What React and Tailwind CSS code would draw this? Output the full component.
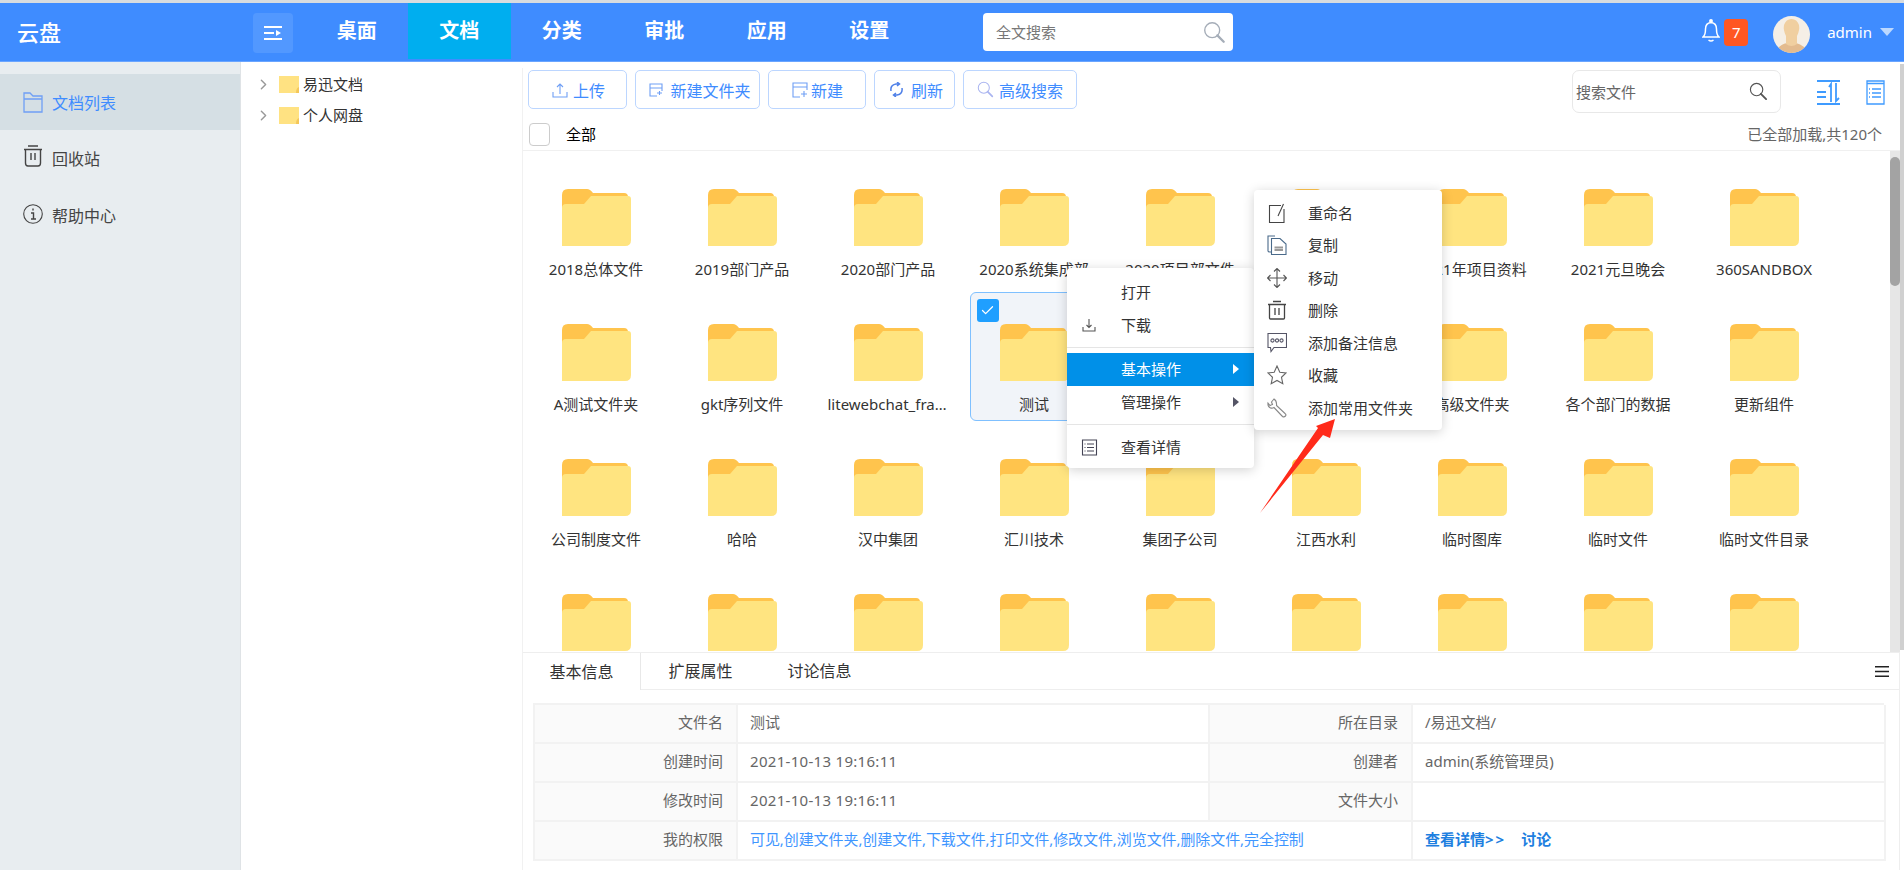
import { ChevronRight, Check } from "lucide-react";

const navs = ["桌面", "文档", "分类", "审批", "应用", "设置"];

const files = [
  "2018总体文件", "2019部门产品", "2020部门产品", "2020系统集成部", "2020项目部文件", "2021年度计划", "2021年项目资料", "2021元旦晚会", "360SANDBOX",
  "A测试文件夹", "gkt序列文件", "litewebchat_framework", "测试", "测试文件", "产品资料", "高级文件夹", "各个部门的数据", "更新组件",
  "公司制度文件", "哈哈", "汉中集团", "汇川技术", "集团子公司", "江西水利", "临时图库", "临时文件", "临时文件目录",
  "", "", "", "", "", "", "", "", "",
];

function Folder() {
  return (
    <svg width="69" height="57" viewBox="0 0 69 57" className="block mx-auto">
      <path d="M0 20V6Q0 0 6 0H25Q28 0 31 4H62Q66 4 66 8V20Z" fill="#ffc44d" />
      <path d="M0 19Q0 15 4 15H22L29 7H66Q69 7 69 10V51Q69 57 63 57H0Z" fill="#ffe480" />
    </svg>
  );
}

function TreeFolder() {
  return (
    <svg width="20" height="17" viewBox="0 0 20 17" className="shrink-0">
      <path d="M0 0H20V17H0Z" fill="#ffe282" />
      <path d="M20 11V17H17Q17 12 20 11Z" fill="#f4c75a" />
    </svg>
  );
}

function Glass({ size = 20, color = "#777" }) {
  return (
    <svg width={size} height={size} viewBox="0 0 20 20" fill="none" stroke={color}>
      <circle cx="8" cy="8" r="6.5" strokeWidth="1.2" />
      <path d="M12.5 12.5L18 18" strokeWidth="2" strokeLinecap="round" />
    </svg>
  );
}

function Ico({ children, size = 18, color = "#3f8cff", view = 18 }) {
  return (
    <svg width={size} height={size} viewBox={`0 0 ${view} ${view}`} fill="none" stroke={color} strokeWidth="1.1" className="shrink-0">
      {children}
    </svg>
  );
}

function ToolBtn({ w, icon, label, gap = "gap-[5px]" }) {
  return (
    <button className={`${w} ${gap} h-[39px] flex items-center justify-center border border-[#bcd6ff] rounded-[5px] bg-white text-[16px] text-[#3f8cff]`}>
      {icon}
      <span className="mt-[2px]">{label}</span>
    </button>
  );
}

const Row = ({ children }) => <div className="contents">{children}</div>;
const Lab = ({ children }) => (
  <div className="h-[39px] pb-[2px] flex items-center justify-end pr-[13px] bg-[#fafafa] border-r-2 border-b-2 border-[#f2f2f2] text-[15px] text-[#666]">{children}</div>
);
const Val = ({ children, cls = "" }) => (
  <div className={`h-[39px] pb-[2px] flex items-center pl-[12px] border-r-2 border-b-2 border-[#f2f2f2] text-[15px] text-[#666] ${cls}`}>{children}</div>
);

function MenuItem({ icon, label, active, arrow }) {
  return (
    <div className={`h-[32.5px] flex items-center text-[15px] relative ${active ? "bg-[#0090e8] text-white" : "text-[#333]"}`}>
      <span className="w-[54px] flex justify-center pr-[10px]">{icon}</span>
      {label}
      {arrow && (
        <svg width="6" height="10" viewBox="0 0 6 10" className="absolute left-[166px] top-[11px]">
          <path d="M0 0L6 5L0 10Z" fill={active ? "#fff" : "#556"} />
        </svg>
      )}
    </div>
  );
}

const subItems = [
  {
    label: "重命名",
    icon: (
      <Ico size={20} color="#444" view={20}>
        <path d="M14 2.5H2.5V19.5H17V6" />
        <path d="M16.5 1L11 13" />
      </Ico>
    ),
  },
  {
    label: "复制",
    icon: (
      <Ico size={20} color="#4a6a8a" view={20}>
        <path d="M8 1H1V16Q1 17 3 17H5" />
        <path d="M4.5 3.5H13L19 9V19.5H4.5Z" />
        <path d="M7.5 12.5H16M7.5 15H16" stroke="#999" strokeWidth="2" />
      </Ico>
    ),
  },
  {
    label: "移动",
    icon: (
      <Ico size={20} color="#555" view={20}>
        <path d="M10 .5V19.5M.5 10H19.5M7 3.5L10 .5L13 3.5M7 16.5L10 19.5L13 16.5M3.5 7L.5 10L3.5 13M16.5 7L19.5 10L16.5 13" />
      </Ico>
    ),
  },
  {
    label: "删除",
    icon: (
      <Ico size={20} color="#444" view={20}>
        <path d="M1 4.5H19M6 1.5H14M2.5 4.5V18Q2.5 19 3.5 19H16.5Q17.5 19 17.5 18V4.5M8 8V15M12 8V15" strokeWidth="1.3" />
      </Ico>
    ),
  },
  {
    label: "添加备注信息",
    icon: (
      <Ico size={20} color="#556" view={20}>
        <path d="M1 .5H19.5V14.5H7L4 18.5L3.5 14.5H1Z" />
        <circle cx="5.5" cy="7.5" r="1.6" />
        <circle cx="10" cy="7.5" r="1.6" />
        <circle cx="14.5" cy="7.5" r="1.6" />
      </Ico>
    ),
  },
  {
    label: "收藏",
    icon: (
      <Ico size={20} color="#666" view={20}>
        <path d="M10 1L12.8 7.2L19 8L14.5 12.3L15.8 18.8L10 15.5L4.2 18.8L5.5 12.3L1 8L7.2 7.2Z" />
      </Ico>
    ),
  },
  {
    label: "添加常用文件夹",
    icon: (
      <Ico size={20} color="#888" view={20}>
        <path d="M7 1L4.5 4L5.5 6.5L3 7.5L1 5Q.5 9 3.5 10Q5.5 10.5 7 9.5L15.5 18.5Q17 19.5 18.5 18Q19.5 16.5 18 15.5L9.5 7.5Q10 3 7 1Z" />
      </Ico>
    ),
  },
];

export default function App() {
  return (
    <div className="relative h-screen overflow-hidden bg-white font-['Noto_Sans','Noto_Sans_CJK_SC',sans-serif]">
      <div className="h-[3px] bg-[#d8dcdf]" />

      {/* top bar */}
      <header className="h-[59px] flex bg-[#3f8cff] border-b border-[#6aa5ff] text-white">
        <div className="w-[253px] pl-[17px] flex items-center text-[22px] font-medium">云盘</div>
        <div className="mt-[10px] w-10 h-10 rounded bg-white/10 flex items-center justify-center">
          <svg width="18" height="14" viewBox="0 0 18 14" fill="white">
            <path d="M0 0H18V2H0ZM0 6H10V8H0ZM0 12H18V14H0ZM12 4L17 7L12 10Z" />
          </svg>
        </div>
        <nav className="ml-[12.5px] flex">
          {navs.map((n) => (
            <a key={n} className={`w-[102.5px] h-[56px] flex items-center justify-center text-[20px] font-bold ${n === "文档" ? "bg-[#00aeef]" : ""}`}>
              {n}
            </a>
          ))}
        </nav>
        <div className="ml-[62.5px] mt-[10px] w-[250px] h-[38px] bg-white rounded-sm flex items-center pl-[13px] pr-[7px] text-[15px] text-[#777]">
          全文搜索
          <span className="ml-auto">
            <Glass size={23} color="#a5adb8" />
          </span>
        </div>
        <div className="ml-auto flex items-start">
          <svg width="18" height="24" viewBox="0 0 18 24" fill="none" stroke="white" strokeWidth="1.5" className="mt-[16px]">
            <path d="M1 18Q3.5 16 3.5 10Q3.5 4 9 3.5Q14.5 4 14.5 10Q14.5 16 17 18Z" />
            <circle cx="9" cy="2" r="1.2" fill="white" />
            <path d="M6.5 21Q9 23 11.5 21" />
          </svg>
          <span className="ml-[4px] mt-[16px] w-[24px] h-[27px] rounded-sm bg-[#ff5722] flex items-center justify-center text-[15px]">7</span>
          <svg width="37" height="37" viewBox="0 0 37 37" className="ml-[25px] mt-[13px]">
            <clipPath id="av">
              <circle cx="18.5" cy="18.5" r="18.5" />
            </clipPath>
            <g clipPath="url(#av)">
              <rect width="37" height="37" fill="#f5efe6" />
              <path d="M3 37Q5 29 14 27Q18.5 30 23 27Q32 29 34 37Z" fill="#e3bb8f" />
              <path d="M13 28V20Q10 14 11 9Q13 3 18.5 3Q24 3 26 9Q27 14 24 20V28Q18.5 32 13 28Z" fill="#f0cfa0" />
            </g>
          </svg>
          <span className="ml-[17px] mt-[18px] text-[15px]">admin</span>
          <svg width="14" height="8" viewBox="0 0 14 8" className="ml-[8px] mt-[25px] mr-[10px]">
            <path d="M0 0H14L7 8Z" fill="#bcd8ff" />
          </svg>
        </div>
      </header>

      <div className="flex h-[808px]">
        {/* left menu */}
        <aside className="w-[241px] shrink-0 bg-[#e8edf0] border-r border-[#dfe3e6] pt-[12px] text-[16px]">
          <div className="h-[56px] bg-[#d5dfe4] flex items-center pl-[23px] gap-[9px] text-[#3f8cff]">
            <svg width="20" height="21" viewBox="0 0 20 21" fill="none" stroke="#6f9ff5" strokeWidth="1.3">
              <path d="M1 20V1H7L10 4H19V20ZM1 7H19" />
            </svg>
            <span className="mt-[2px]">文档列表</span>
          </div>
          <div className="h-[56px] flex items-center pl-[23px] gap-[9px] text-[#444]">
            <svg width="20" height="22" viewBox="0 0 20 22" fill="none" stroke="#444" strokeWidth="1.4" className="mb-[4px]">
              <path d="M5 1H15M1 4.5H19M2.5 4.5V18Q2.5 21 5 21H15Q17.5 21 17.5 18V4.5M8 8V15M12 8V15" />
            </svg>
            <span className="mt-[2px]">回收站</span>
          </div>
          <div className="h-[56px] flex items-center pl-[23px] gap-[9px] text-[#444]">
            <svg width="20" height="20" viewBox="0 0 20 20" fill="none" stroke="#444" strokeWidth="1.1">
              <circle cx="10" cy="10" r="9.3" />
              <path d="M8 9H10.5V15M8 15H13M10 4.5V6.5" strokeWidth="1.4" />
            </svg>
            <span className="mt-[3px]">帮助中心</span>
          </div>
        </aside>

        {/* tree */}
        <div className="w-[281px] shrink-0 pt-[7px] text-[15px] text-[#333]">
          {["易迅文档", "个人网盘"].map((t) => (
            <div key={t} className="h-[31px] flex items-center pl-[14px]">
              <ChevronRight size={17} color="#999" />
              <span className="ml-[7px] mr-[4px]">
                <TreeFolder />
              </span>
              {t}
            </div>
          ))}
        </div>

        {/* content */}
        <main className="flex-1 min-w-0 mt-[6px] border-l border-[#f1f1f1] flex flex-col">
          <div className="h-[50px] flex items-start pt-[2px] pl-[5px] pr-[15px]">
            <div className="flex gap-2">
              <ToolBtn
                w="w-[99px] pl-[2px]"
                label="上传"
                icon={
                  <Ico size={16} view={16} color="#6f9ff5">
                    <path d="M1 10V15H15V10M8 12V2M5 5L8 2L11 5" />
                  </Ico>
                }
              />
              <ToolBtn
                w="w-[125px] pl-[5px]"
                gap="gap-[7px]"
                label="新建文件夹"
                icon={
                  <Ico size={14} view={14} color="#6f9ff5">
                    <path d="M13 8V1H1V13H8M1 5H13M8 10H13M10.5 8V12" />
                  </Ico>
                }
              />
              <ToolBtn
                w="w-[98px] pl-[1px]"
                gap="gap-[3px]"
                label="新建"
                icon={
                  <Ico size={16} view={16} color="#6f9ff5">
                    <path d="M15 8V1H1V15H8M1 5H15M9 12H15M12 9V15" />
                  </Ico>
                }
              />
              <ToolBtn
                w="w-[81px] pl-[3px]"
                gap="gap-[7px]"
                label="刷新"
                icon={
                  <Ico size={15} view={15} color="#4f80e8">
                    <path d="M2 9Q1 3 7 2H10M8 0L10.5 2L8 4M13 6Q14 12 8 13H5M7 11L4.5 13L7 15" strokeWidth="1.5" />
                  </Ico>
                }
              />
              <ToolBtn w="w-[114px]" label="高级搜索" icon={<Glass size={17} color="#a9b4f0" />} />
            </div>

            <div className="ml-auto w-[209px] h-[43px] border border-[#e8e8e8] rounded-[7px] flex items-center pl-[3px] pr-[12px] text-[15px] text-[#666]">
              <span className="mt-[2px]">搜索文件</span>
              <span className="ml-auto">
                <Glass size={19} color="#555" />
              </span>
            </div>
            <svg width="26" height="25" viewBox="0 0 26 25" fill="none" stroke="#3f9bff" strokeWidth="1.8" className="ml-[36px] mt-[10px]">
              <path d="M0 1H23M0 12H9M0 17H9M0 24H23M14 22V4L12 7M19 3V21L22 18" />
            </svg>
            <svg width="19" height="25" viewBox="0 0 19 25" fill="none" stroke="#3f9bff" strokeWidth="1.3" className="ml-[23px] mt-[10px]">
              <path d="M1 1H18V24H1ZM1 3.5H18M6 9H15M6 13H15M6 17H15M3 9H4M3 13H4M3 17H4" />
            </svg>
          </div>

          <div className="h-[33px] flex items-center pl-[6px] pr-[18px] border-b border-[#f0f0f0]">
            <span className="w-[21px] h-[23px] border border-[#ccc] rounded-sm" />
            <span className="ml-[16px] text-[15px] text-black">全部</span>
            <span className="ml-auto text-[15px] text-[#666]">已全部加载,共120个</span>
          </div>

          <div className="h-[501px] flex overflow-hidden">
            <div className="flex-1 pl-[8.5px] pt-[6px] grid grid-cols-[repeat(9,129px)] auto-rows-[129px] gap-x-[17px] gap-y-[6px]">
              {files.map((f, i) => (
                <div key={i} className={`relative rounded-md border pt-[31px] ${f === "测试" ? "bg-[#f1f4f9] border-[#7fc0ff]" : "border-transparent"}`}>
                  {f === "测试" && (
                    <span className="absolute left-[6px] top-[6px] w-[22px] h-[23px] rounded-[3px] bg-[#1f9fff] flex items-center justify-center">
                      <Check size={15} color="white" strokeWidth={2} />
                    </span>
                  )}
                  <Folder />
                  <div className="mt-[13px] px-[3px] text-center truncate text-[15px] leading-[20px] text-[#333]">{f}</div>
                </div>
              ))}
            </div>
            <div className="w-[10px] bg-[#e6e6e6] pt-[6px]">
              <div className="h-[129px] bg-[#a3a3a3] rounded-full" />
            </div>
          </div>

          {/* detail panel */}
          <div className="h-[218px] border-t border-r border-[#eeeeee]">
            <div className="h-[37px] flex items-stretch border-b border-[#eeeeee] text-[16px] text-[#333]">
              <span className="w-[118px] h-[37px] bg-white border-r border-[#e8e8e8] flex items-center justify-center">基本信息</span>
              <span className="w-[119px] flex items-center justify-center">扩展属性</span>
              <span className="w-[119px] flex items-center justify-center">讨论信息</span>
              <svg width="14" height="11" viewBox="0 0 14 11" className="ml-auto mr-[10px] mt-[13px]">
                <path d="M0 0H14V1.5H0ZM0 4.75H14V6.25H0ZM0 9.5H14V11H0Z" fill="#222" />
              </svg>
            </div>
            <div className="ml-[10px] mt-[13px] w-[1351px] grid grid-cols-[203px_472px_203px_473px] border-l-2 border-t-2 border-[#f2f2f2]">
              <Row>
                <Lab>文件名</Lab>
                <Val>测试</Val>
                <Lab>所在目录</Lab>
                <Val>/易迅文档/</Val>
              </Row>
              <Row>
                <Lab>创建时间</Lab>
                <Val cls="tracking-[0.3px]">2021-10-13 19:16:11</Val>
                <Lab>创建者</Lab>
                <Val>admin(系统管理员)</Val>
              </Row>
              <Row>
                <Lab>修改时间</Lab>
                <Val cls="tracking-[0.3px]">2021-10-13 19:16:11</Val>
                <Lab>文件大小</Lab>
                <Val />
              </Row>
              <Row>
                <Lab>我的权限</Lab>
                <Val cls="col-span-2 !text-[#3f96ff] tracking-[-0.08px]">可见,创建文件夹,创建文件,下载文件,打印文件,修改文件,浏览文件,删除文件,完全控制</Val>
                <Val cls="gap-[15px] !text-[#1e7fe0] font-bold">
                  <span>
                    查看详情<span className="tracking-[2px]">&gt;&gt;</span>
                  </span>
                  <span>讨论</span>
                </Val>
              </Row>
            </div>
          </div>
        </main>

        <div className="w-[4px] shrink-0 mt-[2px] h-[586px] bg-[#d0d0d0]" />
      </div>

      {/* context menu */}
      <div className="absolute left-[1067px] top-[268px] w-[187px] h-[200px] bg-white rounded-[4px] shadow-[0_2px_12px_rgba(0,0,0,0.18)] pt-[8px]">
        <MenuItem label="打开" />
        <MenuItem
          label="下载"
          icon={
            <Ico size={14} view={14} color="#555">
              <path d="M1 9V13H13V9M7 1V9.5M4.5 7L7 9.5L9.5 7" />
            </Ico>
          }
        />
        <div className="h-[12px] flex items-center">
          <div className="w-full h-px bg-[#e5e5e5]" />
        </div>
        <MenuItem label="基本操作" active arrow />
        <MenuItem label="管理操作" arrow />
        <div className="h-[13px] flex items-center">
          <div className="w-full h-px bg-[#e5e5e5]" />
        </div>
        <MenuItem
          label="查看详情"
          icon={
            <Ico size={17} view={17} color="#445">
              <path d="M1.5 1H15.5V16H1.5ZM6 5H13M6 8.5H13M6 12H13M3.5 5H4.5M3.5 8.5H4.5M3.5 12H4.5" />
            </Ico>
          }
        />
      </div>

      {/* sub menu */}
      <div className="absolute left-[1254px] top-[190px] w-[188px] h-[240px] bg-white rounded-[4px] shadow-[0_2px_12px_rgba(0,0,0,0.18)] pt-[6.5px]">
        {subItems.map((s) => (
          <div key={s.label} className="h-[32.5px] flex items-center pl-[13px] text-[15px] text-[#333]">
            <span className="w-[41px] shrink-0">{s.icon}</span>
            {s.label}
          </div>
        ))}
      </div>

      {/* red arrow */}
      <svg width="80" height="100" viewBox="0 0 80 100" className="absolute left-[1258px] top-[417px]">
        <path d="M2 96L60 11L58 9L77 2L72 21L65 18Z" fill="#ff2a1a" />
      </svg>
    </div>
  );
}
